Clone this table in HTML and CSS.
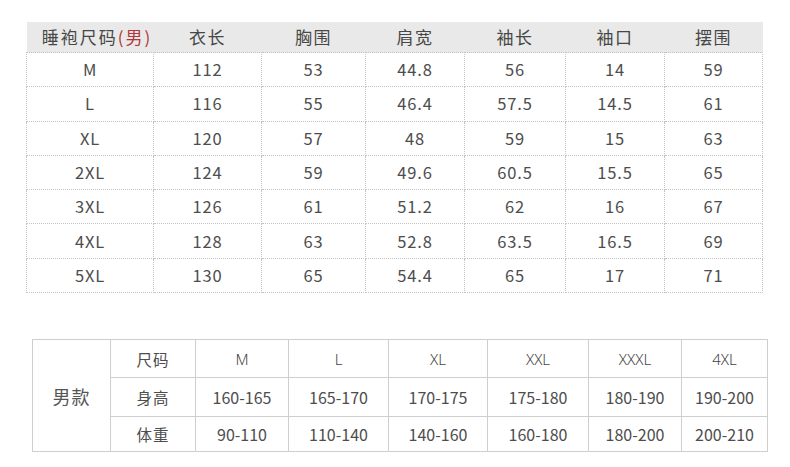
FILE: index.html
```html
<!DOCTYPE html>
<html lang="zh">
<head>
<meta charset="utf-8">
<link rel="stylesheet" href="styles.css">
</head>
<body>
<div class="page">
  <table class="size">
    <colgroup>
      <col style="width:127px"><col style="width:108px"><col style="width:104px"><col style="width:99px"><col style="width:101px"><col style="width:99px"><col style="width:98px">
    </colgroup>
    <thead>
      <tr><th class="first">睡袍尺码<span class="red">(男)</span></th><th>衣长</th><th>胸围</th><th>肩宽</th><th>袖长</th><th>袖口</th><th>摆围</th></tr>
    </thead>
    <tbody>
      <tr><td>M</td><td>112</td><td>53</td><td>44.8</td><td>56</td><td>14</td><td>59</td></tr>
      <tr><td>L</td><td>116</td><td>55</td><td>46.4</td><td>57.5</td><td>14.5</td><td>61</td></tr>
      <tr><td>XL</td><td>120</td><td>57</td><td>48</td><td>59</td><td>15</td><td>63</td></tr>
      <tr><td>2XL</td><td>124</td><td>59</td><td>49.6</td><td>60.5</td><td>15.5</td><td>65</td></tr>
      <tr><td>3XL</td><td>126</td><td>61</td><td>51.2</td><td>62</td><td>16</td><td>67</td></tr>
      <tr><td>4XL</td><td>128</td><td>63</td><td>52.8</td><td>63.5</td><td>16.5</td><td>69</td></tr>
      <tr><td>5XL</td><td>130</td><td>65</td><td>54.4</td><td>65</td><td>17</td><td>71</td></tr>
    </tbody>
  </table>

  <table class="fit">
    <colgroup>
      <col style="width:78px"><col style="width:85px"><col style="width:93px"><col style="width:100px"><col style="width:99px"><col style="width:101px"><col style="width:93px"><col style="width:86px">
    </colgroup>
    <tr class="r1"><td rowspan="3" class="label">男款</td><td class="cn">尺码</td><td class="thin">M</td><td class="thin">L</td><td class="thin">XL</td><td class="thin">XXL</td><td class="thin">XXXL</td><td class="thin">4XL</td></tr>
    <tr class="r2"><td class="cn">身高</td><td>160-165</td><td>165-170</td><td>170-175</td><td>175-180</td><td>180-190</td><td>190-200</td></tr>
    <tr class="r3"><td class="cn">体重</td><td>90-110</td><td>110-140</td><td>140-160</td><td>160-180</td><td>180-200</td><td>200-210</td></tr>
  </table>
</div>
</body>
</html>
```

FILE: styles.css
```css
html, body {
  margin: 0;
  padding: 0;
  background: #ffffff;
}
body {
  font-family: "Noto Sans CJK SC", "Noto Sans", sans-serif;
  color: #4a4a4a;
}
.page {
  display: flex;
  flex-direction: column;
  align-items: flex-start;
  padding: 22px 0 0 26px;
}
table {
  border-collapse: collapse;
  table-layout: fixed;
}
.size {
  width: 736px;
}
.size th {
  background: #e9e9e9;
  height: 30px;
  padding: 0;
  font-weight: 400;
  font-size: 17px;
  letter-spacing: 1.5px;
  color: #474747;
  text-align: center;
  line-height: 30px;
}
.size th.first {
  padding-left: 14px;
  letter-spacing: 2px;
}
.size .red {
  color: #b03838;
}
.size td {
  border: 1px dotted #c4c4c4;
  height: 33.3px;
  padding: 0;
  text-align: center;
  font-size: 16.5px;
  letter-spacing: 0.8px;
  color: #4d4d4d;
  line-height: 33px;
}
.fit {
  width: 735px;
  margin: 46px 0 0 6px;
}
.fit td {
  border: 1px solid #cfcfcf;
  padding: 0;
  text-align: center;
  font-size: 16px;
  color: #4d4d4d;
}
.fit .r1 td { height: 37px; }
.fit .r2 td { height: 38px; }
.fit .r3 td { height: 34px; }
.fit .label {
  font-size: 18px;
  letter-spacing: 1px;
  color: #555;
}
.fit .cn {
  font-size: 15.5px;
  letter-spacing: 1px;
}
.fit .thin {
  font-family: "Noto Sans", sans-serif;
  font-weight: 300;
  font-size: 15px;
  color: #444;
}
```
